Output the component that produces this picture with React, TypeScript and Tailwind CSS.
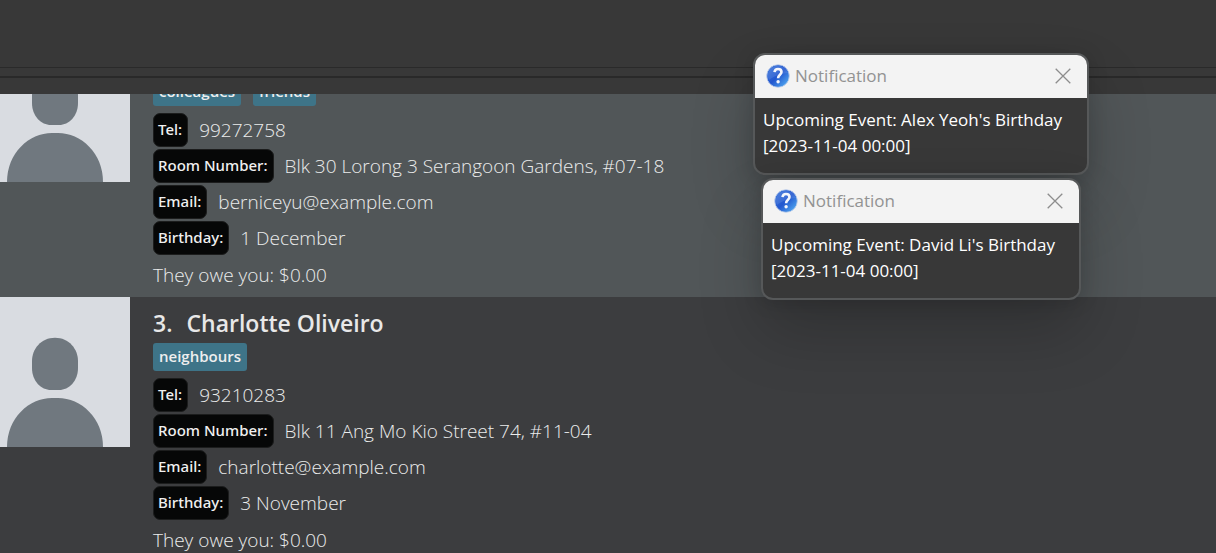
import { useState } from "react";

type Person = {
  index: number;
  name: string;
  tags: string[];
  fields: { label: string; value: string }[];
  debt: string;
};

const people: Person[] = [
  {
    index: 2,
    name: "Bernice Yu",
    tags: ["colleagues", "friends"],
    fields: [
      { label: "Tel:", value: "99272758" },
      { label: "Room Number:", value: "Blk 30 Lorong 3 Serangoon Gardens, #07-18" },
      { label: "Email:", value: "berniceyu@example.com" },
      { label: "Birthday:", value: "1 December" },
    ],
    debt: "They owe you: $0.00",
  },
  {
    index: 3,
    name: "Charlotte Oliveiro",
    tags: ["neighbours"],
    fields: [
      { label: "Tel:", value: "93210283" },
      { label: "Room Number:", value: "Blk 11 Ang Mo Kio Street 74, #11-04" },
      { label: "Email:", value: "charlotte@example.com" },
      { label: "Birthday:", value: "3 November" },
    ],
    debt: "They owe you: $0.00",
  },
];

const notices = [
  { id: 1, width: "w-[336px]", event: "Upcoming Event: Alex Yeoh's Birthday", time: "[2023-11-04 00:00]" },
  { id: 2, width: "w-[320px]", event: "Upcoming Event: David Li's Birthday", time: "[2023-11-04 00:00]" },
];

function Avatar() {
  return (
    <svg className="h-[150px] w-[130px] shrink-0" viewBox="0 0 130 150" aria-hidden="true">
      <rect width="130" height="150" fill="#d9dce1" />
      <path
        d="M55 40.7 C41 40.7 32 52 32 64 V71 C32 84 41 93 51 93 H59 C69 93 78 84 78 71 V64 C78 52 69 40.7 55 40.7 Z"
        fill="#70787f"
      />
      <path d="M7 150 C7 121 29 101 52 101 H58 C81 101 103 121 103 150 Z" fill="#70787f" />
    </svg>
  );
}

function QuestionIcon() {
  return (
    <svg className="h-6 w-6 shrink-0" viewBox="0 0 24 24" aria-hidden="true">
      <defs>
        <linearGradient id="ball" x1="0" y1="0" x2="1" y2="1">
          <stop offset="0" stopColor="#3d78dc" />
          <stop offset="0.5" stopColor="#2257cf" />
          <stop offset="1" stopColor="#5cbcf8" />
        </linearGradient>
      </defs>
      <circle cx="12" cy="12" r="11.3" fill="url(#ball)" stroke="#c3d0ea" strokeWidth="0.8" />
      <path d="M1.5 12 A10.5 10.5 0 0 1 22 9 C16 9 8 12 3 16 Z" fill="#ffffff" opacity="0.1" />
      <path
        d="M8.5 8.1 C8.8 5.8 10.2 5 12 5 C14.2 5 15.5 6.2 15.5 8 C15.5 10.7 12.1 10.8 12.1 14.2"
        fill="none"
        stroke="#f4f6fc"
        strokeWidth="2.6"
      />
      <circle cx="12.1" cy="17.8" r="1.7" fill="#f4f6fc" />
    </svg>
  );
}

function PersonCard({ person, className }: { person: Person; className: string }) {
  return (
    <li className={`flex shrink-0 items-start gap-[23px] ${className}`}>
      <Avatar />
      <div className="min-w-0 pt-2.5 pb-1">
        <h2 className="flex h-8 items-center gap-3.5 text-[23px] font-semibold text-[#e8e8e8]">
          <span>{person.index}.</span>
          <span>{person.name}</span>
        </h2>
        <ul className="mt-1 mb-[7px] flex gap-3">
          {person.tags.map((tag) => (
            <li key={tag} className="flex h-7 items-center rounded-[3px] bg-[#3e7488] px-1.5 pb-px text-[15px] font-semibold text-[#eeeeee]">
              {tag}
            </li>
          ))}
        </ul>
        <dl>
          {person.fields.map((field) => (
            <div key={field.label} className="mb-0.5 flex items-center gap-[11px]">
              <dt className="flex h-[34px] items-center rounded-[7px] border border-[#1c1d1d] bg-[#060707] pr-[5px] pb-px pl-1 font-['Noto_Sans',sans-serif] text-[15px] font-medium whitespace-nowrap text-[#f0f0f0]">
                {field.label}
              </dt>
              <dd className="text-[19px] font-[350] text-[#ebecec]">{field.value}</dd>
            </div>
          ))}
        </dl>
        <p className="text-[19px] leading-9 font-[350] text-[#ebecec]">{person.debt}</p>
      </div>
    </li>
  );
}

export default function App() {
  const [open, setOpen] = useState([1, 2]);
  return (
    <div className="relative flex h-screen flex-col overflow-hidden bg-[#3c3d3f] font-['Open_Sans','Noto_Sans',sans-serif]">
      <header className="flex h-[94px] shrink-0 flex-col bg-[#383838] pt-[67px]">
        <div className="h-[11px] border-t border-b-2 border-t-[#2a2a2a] border-b-[#292929]" />
      </header>
      <main className="flex-1 overflow-hidden">
        <ul className="-mt-[62px] flex flex-col">
          {people.map((person, i) => (
            <PersonCard key={person.index} person={person} className={i % 2 === 0 ? "bg-[#515658]" : "bg-[#3c3d3f]"} />
          ))}
        </ul>
      </main>
      <aside className="absolute top-[53px] right-[127px] flex flex-col items-center gap-[3px]">
        {notices
          .filter((notice) => open.includes(notice.id))
          .map((notice) => (
            <section
              key={notice.id}
              className={`overflow-hidden rounded-xl border-2 border-[#565859] bg-[#383838] shadow-[0_32px_64px_rgba(0,0,0,0.2),0_2px_20px_rgba(0,0,0,0.14)] ${notice.width}`}
            >
              <header className="flex h-[43px] items-center bg-[#f3f3f3] pr-4 pb-0.5 pl-[11px]">
                <QuestionIcon />
                <h3 className="ml-[5px] flex-1 text-[17px] text-[#929292]">Notification</h3>
                <button type="button" aria-label="Close" onClick={() => setOpen(open.filter((id) => id !== notice.id))}>
                  <svg className="h-4 w-4" viewBox="0 0 16 16" aria-hidden="true">
                    <path d="M0.7 0.7 L15.3 15.3 M15.3 0.7 L0.7 15.3" stroke="#8d8d8d" strokeWidth="1.3" />
                  </svg>
                </button>
              </header>
              <p className="h-[75px] px-2 pt-[9px] text-[17px] leading-[26px] whitespace-nowrap text-white">
                {notice.event}
                <br />
                {notice.time}
              </p>
            </section>
          ))}
      </aside>
    </div>
  );
}
